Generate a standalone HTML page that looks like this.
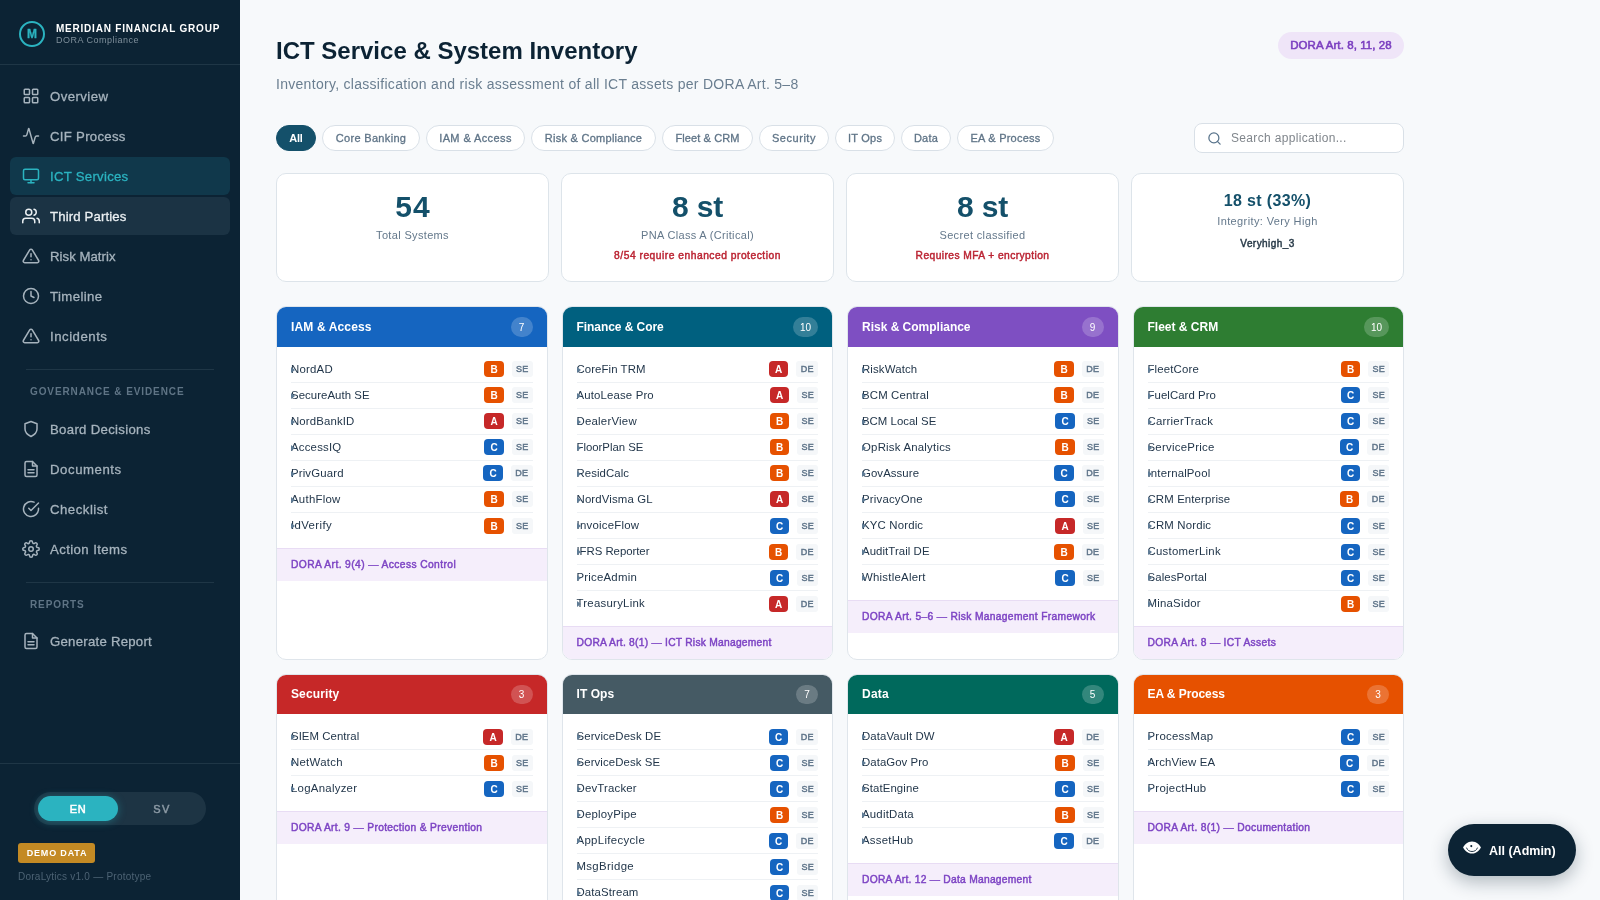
<!DOCTYPE html>
<html lang="en">
<head>
<meta charset="utf-8">
<title>ICT Service &amp; System Inventory — DoraLytics</title>
<style>
*{box-sizing:border-box;margin:0;padding:0}
html,body{width:1600px;height:900px;overflow:hidden}
body{background:#f7f9fb;font-family:"Liberation Sans",sans-serif;color:#0c2334;position:relative;-webkit-font-smoothing:antialiased}
a{text-decoration:none;color:inherit}
ul{list-style:none}
button{font-family:inherit;border:0;background:none}
.ic{flex:none;display:block}

/* ---------- sidebar ---------- */
.sb{will-change:transform;position:absolute;left:0;top:0;width:240px;height:900px;background:#0c2334;color:#a7b3bd}
.sb .hr{position:absolute;height:1px;background:#1f3646}
.brand{position:absolute;left:19px;top:21px;height:26px;display:flex;align-items:flex-start}
.logo{width:26px;height:26px;border-radius:50%;border:2px solid #2bb3c0;color:#2bb3c0;font-weight:700;-webkit-text-stroke:.3px;font-size:12px;line-height:22px;text-align:center;padding-bottom:1px}
.bt{margin-left:11px;white-space:nowrap;padding-top:2px}
.b1{color:#fff;font-weight:700;font-size:10px;letter-spacing:.78px;line-height:12px}
.b2{color:#7f8f9b;font-size:9px;letter-spacing:.5px;line-height:11px;margin-top:0}
.ni{position:absolute;left:10px;width:220px;height:38px;border-radius:6px;display:flex;align-items:center;padding-left:12px;font-size:13.200px;letter-spacing:.36px;color:#a6b3bd;-webkit-text-stroke:.3px;white-space:nowrap}
.ni span{margin-left:10px}
.ni.active{background:#10384b;color:#2bb3c0}
.ni.hover{background:#1b3344;color:#eaeff2}
.sec{position:absolute;left:30px;font-size:10px;font-weight:700;letter-spacing:.9px;color:#5f7485;line-height:14px;white-space:nowrap}
.lang{position:absolute;left:34px;top:792px;width:172px;height:33px;border-radius:17px;background:#1d3444;font-size:11px;font-weight:400;-webkit-text-stroke:.5px;letter-spacing:.7px}
.lang span{position:absolute;top:4px;height:25px;line-height:26px;text-align:center;border-radius:13px}
.lang .on{left:4px;width:80px;background:#2bb3c0;color:#fff;box-shadow:0 1px 8px rgba(43,179,192,.4)}
.lang .off{left:88px;width:80px;color:#8b99a4;letter-spacing:1.300px}
.demo{position:absolute;left:18px;top:843px;width:77px;height:20px;border-radius:3px;background:#c48a24;color:#fff;font-size:9px;font-weight:700;letter-spacing:.82px;line-height:20px;text-align:center;padding-left:1px}
.ver{position:absolute;left:18px;top:870px;font-size:10px;letter-spacing:.24px;color:#4c6273;line-height:14px;white-space:nowrap}

/* ---------- main ---------- */
h1{position:absolute;left:276px;top:35px;font-size:24px;line-height:32px;font-weight:700;color:#0c2334;white-space:nowrap;letter-spacing:0}
.sub{position:absolute;left:276px;top:74px;font-size:14px;letter-spacing:.29px;line-height:20px;color:#6a7e90;white-space:nowrap}
.art{position:absolute;left:1278px;top:32px;width:126px;height:27px;border-radius:14px;background:#efe5f8;color:#7b3fc0;font-size:11.500px;font-weight:400;-webkit-text-stroke:.55px #7b3fc0;letter-spacing:.08px;line-height:27px;text-align:center;white-space:nowrap}
.chip{position:absolute;top:125px;height:26px;border-radius:13px;border:1px solid #d9e0e7;background:#fff;color:#5f7487;-webkit-text-stroke:.3px #5f7487;font-size:11px;font-weight:400;letter-spacing:.3px;line-height:24px;text-align:center;white-space:nowrap}
.chip.on{background:#14506a;border-color:#14506a;color:#fff;font-weight:700;-webkit-text-stroke:0}
.search{position:absolute;left:1194px;top:123px;width:210px;height:30px;border:1px solid #d9e0e7;border-radius:8px;background:#fff;display:flex;align-items:center;padding-left:12px;color:#58738b;font-size:12px;letter-spacing:.33px;white-space:nowrap}
.search span{margin-left:9px;color:#80868c}
.stat{position:absolute;top:173px;width:273px;height:109px;border:1px solid #dde4ea;border-radius:10px;background:#fff;text-align:center}
.stat .v{margin-top:14.500px;font-size:30px;letter-spacing:-.2px;line-height:36px;font-weight:700;color:#14506a}
.stat .l{margin-top:2.500px;font-size:11px;letter-spacing:.35px;line-height:16px;color:#64788b}
.stat .s{margin-top:5.500px;font-size:10.250px;letter-spacing:.12px;line-height:14px;font-weight:400;-webkit-text-stroke:.45px}
.stat .s.red{color:#bb2433}
.stat .s.dark{color:#283a48}
.stat.sm .v{margin-top:16px;font-size:16px;letter-spacing:.34px;line-height:22px}
.stat.sm .l{margin-top:1px}
.stat.sm .s{margin-top:7.500px;font-size:10px}

.card{position:absolute;width:271.500px;height:354px;border:1px solid #dfe5eb;border-radius:10px;background:#fff;overflow:hidden}
.card header{height:40px;padding:0 14px;display:flex;align-items:center;justify-content:space-between;color:#fff}
.card h2{font-size:12px;letter-spacing:.05px;font-weight:700;white-space:nowrap;line-height:14px}
.card .n{min-width:22px;height:20px;border-radius:10px;background:rgba(255,255,255,.2);font-size:10px;line-height:21px;text-align:center;color:#fff;padding:0 7px}
.card ul{padding:10px 14px 9px 14px}
.card.r2 header{height:39px}
.card.r2 h2{position:relative;top:-1px}
.card.r2 .n{height:19px;line-height:19.500px}
.card li{position:relative;height:26px;border-bottom:1px solid #eef1f4;display:flex;align-items:flex-start;font-size:11.400px;letter-spacing:.17px;line-height:25px;color:#22364a;white-space:nowrap}
.card li:last-child{border-bottom-color:transparent}
.card li:nth-child(n+7) .bd,.card li:nth-child(n+7) .tg,.card.r2 .bd,.card.r2 .tg{margin-top:5px}
.tri{position:absolute;left:0;top:9.500px;width:0;height:0;border-left:4.500px solid #5f7c96;border-top:3px solid transparent;border-bottom:3px solid transparent}
.nm{flex:1}
.bd{width:19.600px;height:16px;margin-top:4px;border-radius:4px;color:#fff;font-size:10px;font-weight:700;line-height:17.500px;text-align:center;margin-right:8px;letter-spacing:0}
.bd.A{background:#c62828}.bd.B{background:#e65100}.bd.C{background:#1565c0}
.tg{font-style:normal;width:20.700px;text-align:center;height:16px;margin-top:4px;padding:0;border-radius:3px;background:#f5f7f9;color:#60758a;font-size:9px;font-weight:400;-webkit-text-stroke:.45px #60758a;line-height:16.500px;letter-spacing:.35px;padding-left:.35px}
.tg.DE{width:21.700px}
.card footer{height:33px;border-top:1px solid #e8dcf4;background:#f5eefb;color:#7d44c4;-webkit-text-stroke:.45px #7d44c4;font-size:10.250px;font-weight:400;line-height:31.500px;padding-left:14px;white-space:nowrap;letter-spacing:.04px}

.fab{position:absolute;left:1448px;top:824px;width:128px;height:52px;border-radius:26px;background:#0c2334;color:#fff;display:flex;align-items:center;padding-left:15px;font-size:12.500px;font-weight:700;box-shadow:0 6px 18px rgba(12,35,52,.3);white-space:nowrap}
.fab svg{margin-top:-4.500px}
.fab span{margin-left:8px;position:relative;top:.75px}

main{display:block;position:absolute;left:0;top:0;width:1600px;height:900px;will-change:transform}
</style>
</head>
<body>
<aside class="sb">
<div class="brand"><div class="logo">M</div><div class="bt"><div class="b1">MERIDIAN FINANCIAL GROUP</div><div class="b2">DORA Compliance</div></div></div>
<div class="hr" style="top:64px;left:0;width:240px"></div>
<a class="ni " style="top:77px"><svg class="ic" width="18" height="18" viewBox="0 0 24 24" fill="none" stroke="currentColor" stroke-width="2" stroke-linecap="round" stroke-linejoin="round"><rect x="3" y="3" width="7" height="7" rx="1"/><rect x="14" y="3" width="7" height="7" rx="1"/><rect x="14" y="14" width="7" height="7" rx="1"/><rect x="3" y="14" width="7" height="7" rx="1"/></svg><span style="letter-spacing:0.44px">Overview</span></a>
<a class="ni " style="top:117px"><svg class="ic" width="18" height="18" viewBox="0 0 24 24" fill="none" stroke="currentColor" stroke-width="2" stroke-linecap="round" stroke-linejoin="round"><path d="M22 12h-2.480a2 2 0 0 0-1.930 1.460l-2.350 8.360a.25.25 0 0 1-.480 0L9.240 2.180a.25.25 0 0 0-.480 0l-2.350 8.360A2 2 0 0 1 4.490 12H2"/></svg><span style="letter-spacing:0.29px">CIF Process</span></a>
<a class="ni active" style="top:157px"><svg class="ic" width="18" height="18" viewBox="0 0 24 24" fill="none" stroke="currentColor" stroke-width="2" stroke-linecap="round" stroke-linejoin="round"><rect x="2" y="3" width="20" height="14" rx="2" ry="2"/><line x1="8" y1="21" x2="16" y2="21"/><line x1="12" y1="17" x2="12" y2="21"/></svg><span style="letter-spacing:0.27px">ICT Services</span></a>
<a class="ni hover" style="top:197px"><svg class="ic" width="18" height="18" viewBox="0 0 24 24" fill="none" stroke="currentColor" stroke-width="2" stroke-linecap="round" stroke-linejoin="round"><path d="M17 21v-2a4 4 0 0 0-4-4H5a4 4 0 0 0-4 4v2"/><circle cx="9" cy="7" r="4"/><path d="M23 21v-2a4 4 0 0 0-3-3.87"/><path d="M16 3.13a4 4 0 0 1 0 7.75"/></svg><span style="letter-spacing:0.14px">Third Parties</span></a>
<a class="ni " style="top:237px"><svg class="ic" width="18" height="18" viewBox="0 0 24 24" fill="none" stroke="currentColor" stroke-width="2" stroke-linecap="round" stroke-linejoin="round"><path d="M10.29 3.86L1.82 18a2 2 0 0 0 1.71 3h16.94a2 2 0 0 0 1.71-3L13.71 3.86a2 2 0 0 0-3.42 0z"/><line x1="12" y1="9" x2="12" y2="13"/><line x1="12" y1="17" x2="12.01" y2="17"/></svg><span style="letter-spacing:0.03px">Risk Matrix</span></a>
<a class="ni " style="top:277px"><svg class="ic" width="18" height="18" viewBox="0 0 24 24" fill="none" stroke="currentColor" stroke-width="2" stroke-linecap="round" stroke-linejoin="round"><circle cx="12" cy="12" r="10"/><polyline points="12 6 12 12 16 14"/></svg><span style="letter-spacing:0.39px">Timeline</span></a>
<a class="ni " style="top:317px"><svg class="ic" width="18" height="18" viewBox="0 0 24 24" fill="none" stroke="currentColor" stroke-width="2" stroke-linecap="round" stroke-linejoin="round"><path d="M10.29 3.86L1.82 18a2 2 0 0 0 1.71 3h16.94a2 2 0 0 0 1.71-3L13.71 3.86a2 2 0 0 0-3.42 0z"/><line x1="12" y1="9" x2="12" y2="13"/><line x1="12" y1="17" x2="12.01" y2="17"/></svg><span style="letter-spacing:0.52px">Incidents</span></a>
<a class="ni " style="top:410px"><svg class="ic" width="18" height="18" viewBox="0 0 24 24" fill="none" stroke="currentColor" stroke-width="2" stroke-linecap="round" stroke-linejoin="round"><path d="M12 22s8-4 8-10V5l-8-3-8 3v7c0 6 8 10 8 10z"/></svg><span style="letter-spacing:0.31px">Board Decisions</span></a>
<a class="ni " style="top:450px"><svg class="ic" width="18" height="18" viewBox="0 0 24 24" fill="none" stroke="currentColor" stroke-width="2" stroke-linecap="round" stroke-linejoin="round"><path d="M14 2H6a2 2 0 0 0-2 2v16a2 2 0 0 0 2 2h12a2 2 0 0 0 2-2V8z"/><polyline points="14 2 14 8 20 8"/><line x1="16" y1="13" x2="8" y2="13"/><line x1="16" y1="17" x2="8" y2="17"/></svg><span style="letter-spacing:0.56px">Documents</span></a>
<a class="ni " style="top:490px"><svg class="ic" width="18" height="18" viewBox="0 0 24 24" fill="none" stroke="currentColor" stroke-width="2" stroke-linecap="round" stroke-linejoin="round"><path d="M22 11.08V12a10 10 0 1 1-5.93-9.14"/><polyline points="22 4 12 14.01 9 11.01"/></svg><span style="letter-spacing:0.5px">Checklist</span></a>
<a class="ni " style="top:530px"><svg class="ic" width="18" height="18" viewBox="0 0 24 24" fill="none" stroke="currentColor" stroke-width="2" stroke-linecap="round" stroke-linejoin="round"><circle cx="12" cy="12" r="3"/><path d="M19.4 15a1.65 1.65 0 0 0 .33 1.82l.06.06a2 2 0 0 1 0 2.83 2 2 0 0 1-2.83 0l-.06-.06a1.65 1.65 0 0 0-1.82-.33 1.65 1.65 0 0 0-1 1.510V21a2 2 0 0 1-2 2 2 2 0 0 1-2-2v-.09A1.65 1.65 0 0 0 9 19.4a1.65 1.65 0 0 0-1.82.33l-.06.06a2 2 0 0 1-2.83 0 2 2 0 0 1 0-2.83l.06-.06a1.65 1.65 0 0 0 .33-1.82 1.65 1.65 0 0 0-1.510-1H3a2 2 0 0 1-2-2 2 2 0 0 1 2-2h.09A1.65 1.65 0 0 0 4.600 9a1.65 1.65 0 0 0-.33-1.82l-.06-.06a2 2 0 0 1 0-2.83 2 2 0 0 1 2.83 0l.06.06a1.65 1.65 0 0 0 1.82.33H9a1.65 1.65 0 0 0 1-1.510V3a2 2 0 0 1 2-2 2 2 0 0 1 2 2v.09a1.65 1.65 0 0 0 1 1.510 1.65 1.65 0 0 0 1.82-.33l.06-.06a2 2 0 0 1 2.83 0 2 2 0 0 1 0 2.83l-.06.06a1.65 1.65 0 0 0-.33 1.82V9a1.65 1.65 0 0 0 1.510 1H21a2 2 0 0 1 2 2 2 2 0 0 1-2 2h-.09a1.65 1.65 0 0 0-1.510 1z"/></svg><span style="letter-spacing:0.41px">Action Items</span></a>
<a class="ni " style="top:622px"><svg class="ic" width="18" height="18" viewBox="0 0 24 24" fill="none" stroke="currentColor" stroke-width="2" stroke-linecap="round" stroke-linejoin="round"><path d="M14 2H6a2 2 0 0 0-2 2v16a2 2 0 0 0 2 2h12a2 2 0 0 0 2-2V8z"/><polyline points="14 2 14 8 20 8"/><line x1="16" y1="13" x2="8" y2="13"/><line x1="16" y1="17" x2="8" y2="17"/></svg><span style="letter-spacing:0.25px">Generate Report</span></a>
<div class="hr" style="top:369px;left:26px;width:188px"></div>
<div class="sec" style="top:385px">GOVERNANCE &amp; EVIDENCE</div>
<div class="hr" style="top:582px;left:26px;width:188px"></div>
<div class="sec" style="top:598px">REPORTS</div>
<div class="hr" style="top:763px;left:0;width:240px"></div>
<div class="lang"><span class="on">EN</span><span class="off">SV</span></div>
<div class="demo">DEMO DATA</div>
<div class="ver">DoraLytics v1.0 — Prototype</div>
</aside>
<main>
<h1>ICT Service &amp; System Inventory</h1>
<p class="sub">Inventory, classification and risk assessment of all ICT assets per DORA Art. 5–8</p>
<div class="art">DORA Art. 8, 11, 28</div>
<button class="chip on" style="left:276px;width:40px;letter-spacing:-0.24px">All</button>
<button class="chip " style="left:322px;width:98px;letter-spacing:0.33px">Core Banking</button>
<button class="chip " style="left:426px;width:99px;letter-spacing:0.4px">IAM &amp; Access</button>
<button class="chip " style="left:531px;width:125px;letter-spacing:0.27px">Risk &amp; Compliance</button>
<button class="chip " style="left:662px;width:91px;letter-spacing:0.11px">Fleet &amp; CRM</button>
<button class="chip " style="left:759px;width:70px;letter-spacing:0.53px">Security</button>
<button class="chip " style="left:835px;width:60px;letter-spacing:0.24px">IT Ops</button>
<button class="chip " style="left:901px;width:50px;letter-spacing:0.25px">Data</button>
<button class="chip " style="left:957px;width:97px;letter-spacing:0.22px">EA &amp; Process</button>
<div class="search"><svg class="ic" width="15" height="15" viewBox="0 0 24 24" fill="none" stroke="currentColor" stroke-width="2" stroke-linecap="round" stroke-linejoin="round"><circle cx="11" cy="11" r="8"/><line x1="21" y1="21" x2="16.65" y2="16.65"/></svg><span>Search application...</span></div>
<section class="stat" style="left:276px"><div class="v" style="letter-spacing:1px;padding-left:1px">54</div><div class="l" style="letter-spacing:0.34px">Total Systems</div></section>
<section class="stat" style="left:561px"><div class="v">8 st</div><div class="l" style="letter-spacing:0.32px">PNA Class A (Critical)</div><div class="s red" style="letter-spacing:0.51px">8/54 require enhanced protection</div></section>
<section class="stat" style="left:846px"><div class="v">8 st</div><div class="l" style="letter-spacing:0.35px">Secret classified</div><div class="s red" style="letter-spacing:0.42px">Requires MFA + encryption</div></section>
<section class="stat sm" style="left:1131px"><div class="v">18 st (33%)</div><div class="l" style="letter-spacing:0.38px">Integrity: Very High</div><div class="s dark" style="letter-spacing:0.43px">Veryhigh_3</div></section>
<section class="card" style="left:276px;top:306px">
<header style="background:#1565c0"><h2 style="letter-spacing:0.14px">IAM &amp; Access</h2><span class="n">7</span></header>
<ul>
<li><i class="tri"></i><span class="nm" style="letter-spacing:0.22px">NordAD</span><b class="bd B">B</b><em class="tg SE">SE</em></li>
<li><i class="tri"></i><span class="nm" style="letter-spacing:0.05px">SecureAuth SE</span><b class="bd B">B</b><em class="tg SE">SE</em></li>
<li><i class="tri"></i><span class="nm" style="letter-spacing:0.14px">NordBankID</span><b class="bd A">A</b><em class="tg SE">SE</em></li>
<li><i class="tri"></i><span class="nm" style="letter-spacing:0.21px">AccessIQ</span><b class="bd C">C</b><em class="tg SE">SE</em></li>
<li><i class="tri"></i><span class="nm" style="letter-spacing:0.15px">PrivGuard</span><b class="bd C">C</b><em class="tg DE">DE</em></li>
<li><i class="tri"></i><span class="nm" style="letter-spacing:0.26px">AuthFlow</span><b class="bd B">B</b><em class="tg SE">SE</em></li>
<li><i class="tri"></i><span class="nm" style="letter-spacing:0.38px">IdVerify</span><b class="bd B">B</b><em class="tg SE">SE</em></li>
</ul>
<footer style="letter-spacing:0.4px">DORA Art. 9(4) — Access Control</footer>
</section>
<section class="card" style="left:561.5px;top:306px">
<header style="background:#00607f"><h2 style="letter-spacing:-0.06px">Finance &amp; Core</h2><span class="n">10</span></header>
<ul>
<li><i class="tri"></i><span class="nm" style="letter-spacing:0.08px">CoreFin TRM</span><b class="bd A">A</b><em class="tg DE">DE</em></li>
<li><i class="tri"></i><span class="nm" style="letter-spacing:0.15px">AutoLease Pro</span><b class="bd A">A</b><em class="tg SE">SE</em></li>
<li><i class="tri"></i><span class="nm" style="letter-spacing:0.23px">DealerView</span><b class="bd B">B</b><em class="tg SE">SE</em></li>
<li><i class="tri"></i><span class="nm" style="letter-spacing:-0.02px">FloorPlan SE</span><b class="bd B">B</b><em class="tg SE">SE</em></li>
<li><i class="tri"></i><span class="nm" style="letter-spacing:0.07px">ResidCalc</span><b class="bd B">B</b><em class="tg SE">SE</em></li>
<li><i class="tri"></i><span class="nm" style="letter-spacing:0.15px">NordVisma GL</span><b class="bd A">A</b><em class="tg SE">SE</em></li>
<li><i class="tri"></i><span class="nm" style="letter-spacing:0.24px">InvoiceFlow</span><b class="bd C">C</b><em class="tg SE">SE</em></li>
<li><i class="tri"></i><span class="nm" style="letter-spacing:-0.04px">IFRS Reporter</span><b class="bd B">B</b><em class="tg DE">DE</em></li>
<li><i class="tri"></i><span class="nm" style="letter-spacing:0.22px">PriceAdmin</span><b class="bd C">C</b><em class="tg SE">SE</em></li>
<li><i class="tri"></i><span class="nm" style="letter-spacing:0.26px">TreasuryLink</span><b class="bd A">A</b><em class="tg DE">DE</em></li>
</ul>
<footer style="letter-spacing:0.25px">DORA Art. 8(1) — ICT Risk Management</footer>
</section>
<section class="card" style="left:847px;top:306px">
<header style="background:#7e4fc2"><h2 style="letter-spacing:-0.01px">Risk &amp; Compliance</h2><span class="n">9</span></header>
<ul>
<li><i class="tri"></i><span class="nm" style="letter-spacing:0.14px">RiskWatch</span><b class="bd B">B</b><em class="tg DE">DE</em></li>
<li><i class="tri"></i><span class="nm" style="letter-spacing:0.16px">BCM Central</span><b class="bd B">B</b><em class="tg DE">DE</em></li>
<li><i class="tri"></i><span class="nm" style="letter-spacing:0.02px">BCM Local SE</span><b class="bd C">C</b><em class="tg SE">SE</em></li>
<li><i class="tri"></i><span class="nm" style="letter-spacing:0.22px">OpRisk Analytics</span><b class="bd B">B</b><em class="tg SE">SE</em></li>
<li><i class="tri"></i><span class="nm" style="letter-spacing:0.08px">GovAssure</span><b class="bd C">C</b><em class="tg DE">DE</em></li>
<li><i class="tri"></i><span class="nm" style="letter-spacing:0.2px">PrivacyOne</span><b class="bd C">C</b><em class="tg SE">SE</em></li>
<li><i class="tri"></i><span class="nm" style="letter-spacing:0.17px">KYC Nordic</span><b class="bd A">A</b><em class="tg SE">SE</em></li>
<li><i class="tri"></i><span class="nm" style="letter-spacing:0.07px">AuditTrail DE</span><b class="bd B">B</b><em class="tg DE">DE</em></li>
<li><i class="tri"></i><span class="nm" style="letter-spacing:0.25px">WhistleAlert</span><b class="bd C">C</b><em class="tg SE">SE</em></li>
</ul>
<footer style="letter-spacing:0.33px">DORA Art. 5–6 — Risk Management Framework</footer>
</section>
<section class="card" style="left:1132.5px;top:306px">
<header style="background:#2e7d32"><h2 style="letter-spacing:0px">Fleet &amp; CRM</h2><span class="n">10</span></header>
<ul>
<li><i class="tri"></i><span class="nm" style="letter-spacing:0.16px">FleetCore</span><b class="bd B">B</b><em class="tg SE">SE</em></li>
<li><i class="tri"></i><span class="nm" style="letter-spacing:0.06px">FuelCard Pro</span><b class="bd C">C</b><em class="tg SE">SE</em></li>
<li><i class="tri"></i><span class="nm" style="letter-spacing:0.23px">CarrierTrack</span><b class="bd C">C</b><em class="tg SE">SE</em></li>
<li><i class="tri"></i><span class="nm" style="letter-spacing:0.27px">ServicePrice</span><b class="bd C">C</b><em class="tg DE">DE</em></li>
<li><i class="tri"></i><span class="nm" style="letter-spacing:0.17px">InternalPool</span><b class="bd C">C</b><em class="tg SE">SE</em></li>
<li><i class="tri"></i><span class="nm" style="letter-spacing:0.13px">CRM Enterprise</span><b class="bd B">B</b><em class="tg DE">DE</em></li>
<li><i class="tri"></i><span class="nm" style="letter-spacing:0.17px">CRM Nordic</span><b class="bd C">C</b><em class="tg SE">SE</em></li>
<li><i class="tri"></i><span class="nm" style="letter-spacing:0.26px">CustomerLink</span><b class="bd C">C</b><em class="tg SE">SE</em></li>
<li><i class="tri"></i><span class="nm" style="letter-spacing:0.11px">SalesPortal</span><b class="bd C">C</b><em class="tg SE">SE</em></li>
<li><i class="tri"></i><span class="nm" style="letter-spacing:0.23px">MinaSidor</span><b class="bd B">B</b><em class="tg SE">SE</em></li>
</ul>
<footer style="letter-spacing:0.31px">DORA Art. 8 — ICT Assets</footer>
</section>
<section class="card r2" style="left:276px;top:674px">
<header style="background:#c62828"><h2 style="letter-spacing:0.12px">Security</h2><span class="n">3</span></header>
<ul>
<li><i class="tri"></i><span class="nm" style="letter-spacing:0.05px">SIEM Central</span><b class="bd A">A</b><em class="tg DE">DE</em></li>
<li><i class="tri"></i><span class="nm" style="letter-spacing:0.28px">NetWatch</span><b class="bd B">B</b><em class="tg SE">SE</em></li>
<li><i class="tri"></i><span class="nm" style="letter-spacing:0.27px">LogAnalyzer</span><b class="bd C">C</b><em class="tg SE">SE</em></li>
</ul>
<footer style="letter-spacing:0.32px">DORA Art. 9 — Protection &amp; Prevention</footer>
</section>
<section class="card r2" style="left:561.5px;top:674px">
<header style="background:#455a64"><h2 style="letter-spacing:0.07px">IT Ops</h2><span class="n">7</span></header>
<ul>
<li><i class="tri"></i><span class="nm" style="letter-spacing:0.12px">ServiceDesk DE</span><b class="bd C">C</b><em class="tg DE">DE</em></li>
<li><i class="tri"></i><span class="nm" style="letter-spacing:0.1px">ServiceDesk SE</span><b class="bd C">C</b><em class="tg SE">SE</em></li>
<li><i class="tri"></i><span class="nm" style="letter-spacing:0.19px">DevTracker</span><b class="bd C">C</b><em class="tg SE">SE</em></li>
<li><i class="tri"></i><span class="nm" style="letter-spacing:0.2px">DeployPipe</span><b class="bd B">B</b><em class="tg SE">SE</em></li>
<li><i class="tri"></i><span class="nm" style="letter-spacing:0.34px">AppLifecycle</span><b class="bd C">C</b><em class="tg DE">DE</em></li>
<li><i class="tri"></i><span class="nm" style="letter-spacing:0.34px">MsgBridge</span><b class="bd C">C</b><em class="tg SE">SE</em></li>
<li><i class="tri"></i><span class="nm" style="letter-spacing:0.12px">DataStream</span><b class="bd C">C</b><em class="tg SE">SE</em></li>
</ul>
</section>
<section class="card r2" style="left:847px;top:674px">
<header style="background:#00695c"><h2 style="letter-spacing:0.26px">Data</h2><span class="n">5</span></header>
<ul>
<li><i class="tri"></i><span class="nm" style="letter-spacing:0.11px">DataVault DW</span><b class="bd A">A</b><em class="tg DE">DE</em></li>
<li><i class="tri"></i><span class="nm" style="letter-spacing:0.06px">DataGov Pro</span><b class="bd B">B</b><em class="tg SE">SE</em></li>
<li><i class="tri"></i><span class="nm" style="letter-spacing:0.11px">StatEngine</span><b class="bd C">C</b><em class="tg SE">SE</em></li>
<li><i class="tri"></i><span class="nm" style="letter-spacing:0.21px">AuditData</span><b class="bd B">B</b><em class="tg SE">SE</em></li>
<li><i class="tri"></i><span class="nm" style="letter-spacing:0.26px">AssetHub</span><b class="bd C">C</b><em class="tg DE">DE</em></li>
</ul>
<footer style="letter-spacing:0.26px">DORA Art. 12 — Data Management</footer>
</section>
<section class="card r2" style="left:1132.5px;top:674px">
<header style="background:#e65100"><h2 style="letter-spacing:-0.07px">EA &amp; Process</h2><span class="n">3</span></header>
<ul>
<li><i class="tri"></i><span class="nm" style="letter-spacing:0.25px">ProcessMap</span><b class="bd C">C</b><em class="tg SE">SE</em></li>
<li><i class="tri"></i><span class="nm" style="letter-spacing:0.13px">ArchView EA</span><b class="bd C">C</b><em class="tg DE">DE</em></li>
<li><i class="tri"></i><span class="nm" style="letter-spacing:0.26px">ProjectHub</span><b class="bd C">C</b><em class="tg SE">SE</em></li>
</ul>
<footer style="letter-spacing:0.32px">DORA Art. 8(1) — Documentation</footer>
</section>
<div class="fab"><svg width="18" height="13" viewBox="0 0 18 13"><path d="M9 .4C4.500 .4 1.200 3.900 .2 6.500c1 2.600 4.300 6.100 8.800 6.100s7.800-3.500 8.800-6.100C16.800 3.900 13.500 .4 9 .4z" fill="#fff"/><path d="M3.600 7c.8 2.300 2.900 3.500 5.400 3.500s4.600-1.200 5.400-3.500" fill="none" stroke="#0c2334" stroke-width=".9" stroke-linecap="round"/><circle cx="8.300" cy="5.100" r="1.050" fill="#0c2334"/></svg><span>All (Admin)</span></div>
</main>
</body>
</html>
